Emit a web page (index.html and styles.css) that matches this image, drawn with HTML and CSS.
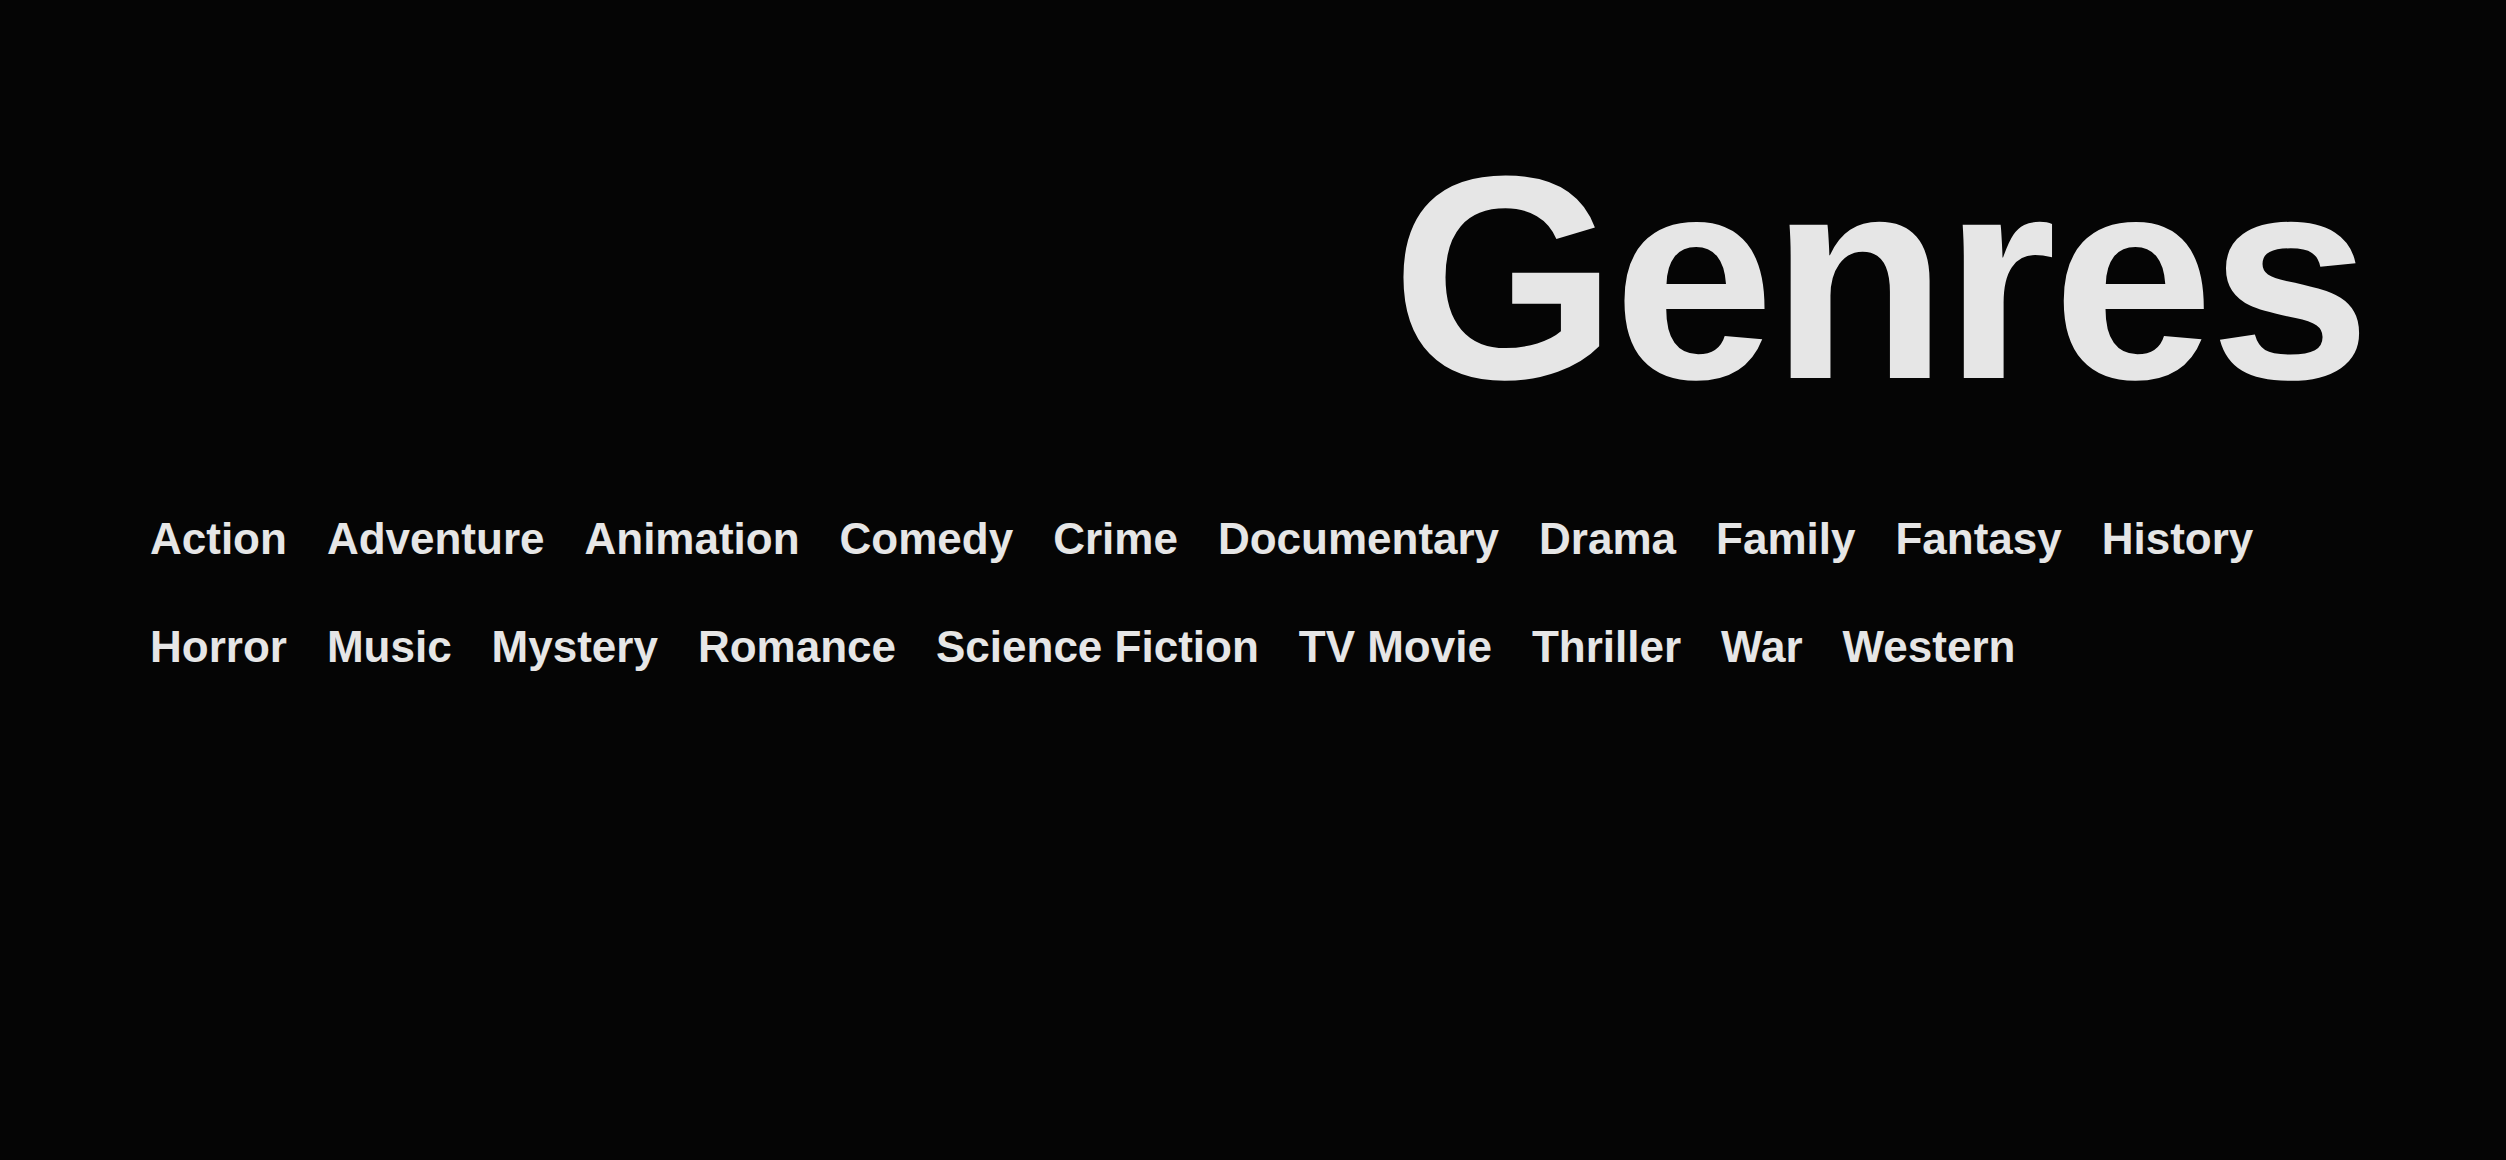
FILE: index.html
```html
<!DOCTYPE html>
<html lang="en">
<head>
<meta charset="utf-8">
<title>Genres</title>
<link rel="stylesheet" href="styles.css">
</head>
<body>
<main class="page">
  <h1 class="title">Genres</h1>
  <ul class="genres">
    <li>Action</li>
    <li>Adventure</li>
    <li>Animation</li>
    <li>Comedy</li>
    <li>Crime</li>
    <li>Documentary</li>
    <li>Drama</li>
    <li>Family</li>
    <li>Fantasy</li>
    <li>History</li>
    <li>Horror</li>
    <li>Music</li>
    <li>Mystery</li>
    <li>Romance</li>
    <li>Science Fiction</li>
    <li>TV Movie</li>
    <li>Thriller</li>
    <li>War</li>
    <li>Western</li>
  </ul>
</main>
</body>
</html>
```
FILE: styles.css
```css
html, body {
  margin: 0;
  padding: 0;
  background: #050505;
  color: #e6e6e6;
  font-family: "Liberation Sans", Arial, Helvetica, sans-serif;
  height: 100%;
}

.page {
  padding: 132px 0 0 150px;
  box-sizing: border-box;
  min-height: 100%;
}

.title {
  margin: 0;
  padding-right: 139px;
  text-align: right;
  font-size: 290px;
  line-height: 1;
  font-weight: 700;
  letter-spacing: -4px;
}

.genres {
  list-style: none;
  margin: 92px 0 0 0;
  padding: 0;
  display: flex;
  flex-wrap: wrap;
  column-gap: 40px;
  row-gap: 57px;
  max-width: 2200px;
}

.genres li {
  font-size: 44px;
  font-weight: 700;
  line-height: 1.15;
  white-space: nowrap;
}
```
